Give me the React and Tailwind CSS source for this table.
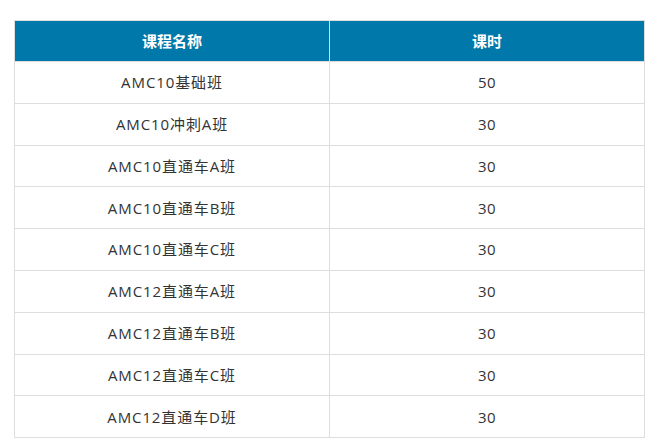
const rows = [
  ['AMC10基础班', '50'],
  ['AMC10冲刺A班', '30'],
  ['AMC10直通车A班', '30'],
  ['AMC10直通车B班', '30'],
  ['AMC10直通车C班', '30'],
  ['AMC12直通车A班', '30'],
  ['AMC12直通车B班', '30'],
  ['AMC12直通车C班', '30'],
  ['AMC12直通车D班', '30'],
];

export default function App() {
  return (
    <div className="w-[656px] h-[446px] bg-white pt-5 pl-[14px] font-['Open_Sans','Noto_Sans_CJK_SC',sans-serif]">
      <table className="w-[631px] table-fixed border-collapse text-[15px] text-[#333]">
        <thead>
          <tr className="h-[41px] bg-[#0079aa] text-white">
            <th className="border border-[#ddd] font-bold">课程名称</th>
            <th className="border border-[#ddd] font-bold">课时</th>
          </tr>
        </thead>
        <tbody>
          {rows.map(([name, hours]) => (
            <tr key={name} className="h-[41.8px]">
              <td className="border border-[#ddd] text-center tracking-[0.9px]">{name}</td>
              <td className="border border-[#ddd] text-center tracking-[0.5px]">{hours}</td>
            </tr>
          ))}
        </tbody>
      </table>
    </div>
  );
}
